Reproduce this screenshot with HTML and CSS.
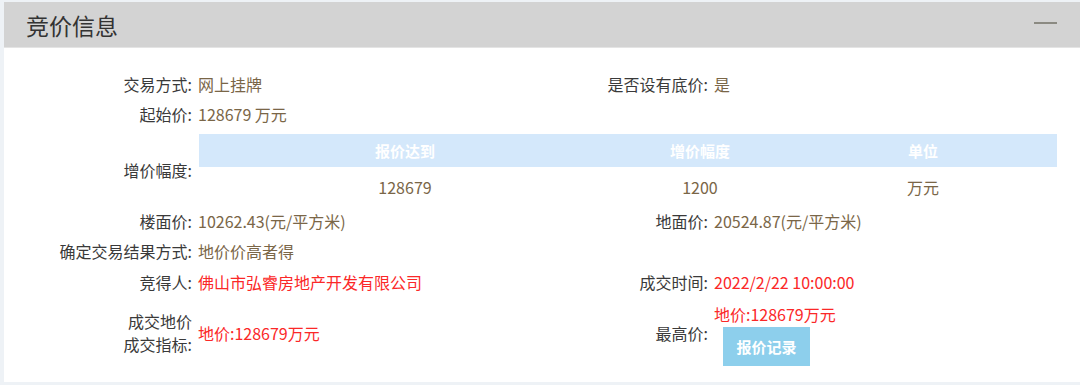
FILE: index.html
```html
<!DOCTYPE html>
<html lang="zh-CN">
<head>
  <meta charset="UTF-8">
  <title>竞价信息</title>
  <link rel="stylesheet" href="styles.css">
</head>
<body>

  <div class="panel">
    <div class="panel-head">
      <h2>竞价信息</h2>
      <span class="fold"></span>
    </div>

    <div class="info">
      <div class="label">交易方式:</div>
      <div class="value">网上挂牌</div>
      <div class="label">是否设有底价:</div>
      <div class="value">是</div>

      <div class="label">起始价:</div>
      <div class="value wide">128679 万元</div>

      <div class="label step-label">增价幅度:</div>
      <div class="wide step">
        <table>
          <thead>
            <tr>
              <th class="c1">报价达到</th>
              <th class="c2">增价幅度</th>
              <th class="c3">单位</th>
            </tr>
          </thead>
          <tbody>
            <tr>
              <td>128679</td>
              <td>1200</td>
              <td>万元</td>
            </tr>
          </tbody>
        </table>
      </div>

      <div class="label">楼面价:</div>
      <div class="value">10262.43(元/平方米)</div>
      <div class="label">地面价:</div>
      <div class="value">20524.87(元/平方米)</div>

      <div class="label">确定交易结果方式:</div>
      <div class="value wide">地价价高者得</div>

      <div class="label">竞得人:</div>
      <div class="value red">佛山市弘睿房地产开发有限公司</div>
      <div class="label">成交时间:</div>
      <div class="value red">2022/2/22 10:00:00</div>

      <div class="label last two-line">
        <span>成交地价</span>
        <span>成交指标:</span>
      </div>
      <div class="value last red">地价:128679万元</div>
      <div class="label last">最高价:</div>
      <div class="value last top-price">
        <span class="red">地价:128679万元</span>
        <button>报价记录</button>
      </div>
    </div>
  </div>

</body>
</html>
```

FILE: styles.css
```css
body {
  margin: 0;
  padding: 2px 0 3px 4px;
  background: #eef2f6;
  font-family: "Microsoft YaHei", "Noto Sans CJK SC", sans-serif;
  font-size: 16px;
  color: #3a3a3a;
}

.panel {
  background: #fff;
  height: 380px;
}

.panel-head {
  height: 45px;
  background: #d3d3d3;
  border-bottom: 1px solid #e4e4e4;
  display: flex;
  align-items: center;
  justify-content: space-between;
  padding: 0 23px 0 22px;
}

.panel-head h2 {
  margin: 0;
  font-size: 23px;
  font-weight: normal;
  color: #333;
}

.fold {
  width: 23px;
  border-top: 2px solid #8b8a82;
  margin-bottom: 4px;
}

.info {
  display: grid;
  grid-template-columns: 188px 330px 186px 1fr;
  grid-template-rows: 30px 30px 77px 30px 30px 32px 68px;
  padding: 21px 23px 0 0;
}

.label,
.value {
  display: flex;
  align-items: center;
  white-space: nowrap;
}

.label {
  justify-content: flex-end;
  color: #3a3a3a;
}

.value {
  padding-left: 6px;
  color: #7a6647;
}

.wide {
  grid-column: 2 / 5;
}

.red {
  color: #fb2828;
}

.step-label {
  height: 72px;
  margin-top: 5px;
}

.step {
  height: 72px;
  margin-top: 5px;
  padding-left: 7px;
}

table {
  width: 100%;
  border-collapse: collapse;
}

th {
  height: 33px;
  padding: 0;
  background: #d4e8fb;
  color: #fff;
  font-size: 15px;
  font-weight: bold;
}

td {
  height: 39px;
  padding: 0;
  text-align: center;
  color: #7a6647;
}

.c1 { width: 412px; }
.c2 { width: 178px; }
.c3 { width: 268px; }

.two-line {
  flex-direction: column;
  align-items: flex-end;
  justify-content: center;
  line-height: 23px;
}

.last {
  padding-top: 2px;
}

.top-price {
  flex-direction: column;
  align-items: flex-start;
  justify-content: flex-start;
  padding-top: 4px;
}

.top-price button {
  margin: 1px 0 0 9px;
  width: 87px;
  height: 39px;
  border: none;
  background: #8dcfec;
  color: #fff;
  font-family: inherit;
  font-size: 15px;
  font-weight: bold;
  cursor: pointer;
}
```
